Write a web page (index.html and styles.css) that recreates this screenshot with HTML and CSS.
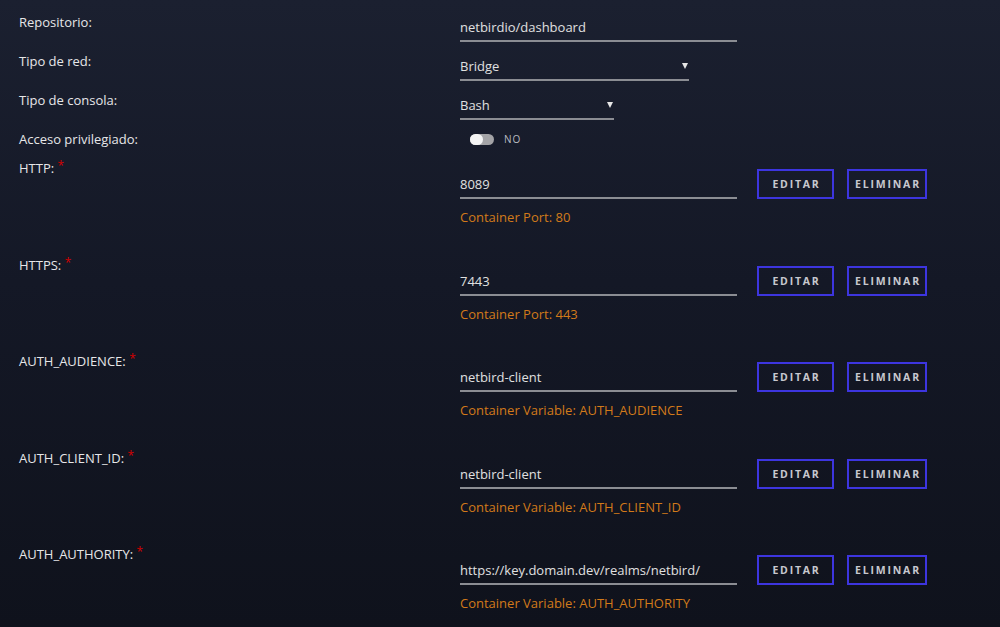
FILE: index.html
```html
<!DOCTYPE html>
<html>
<head>
<meta charset="utf-8">
<title>Docker - netbird dashboard</title>
<link rel="stylesheet" href="styles.css">
</head>
<body>
<div class="form">
	<div class="row">
		<div class="label">Repositorio:</div>
		<div class="field"><div class="input w-repo">netbirdio/dashboard</div></div>
	</div>
	<div class="row">
		<div class="label">Tipo de red:</div>
		<div class="field"><div class="input select w-net">Bridge<span class="arrow"></span></div></div>
	</div>
	<div class="row">
		<div class="label">Tipo de consola:</div>
		<div class="field"><div class="input select w-shell">Bash<span class="arrow"></span></div></div>
	</div>
	<div class="row row-switch">
		<div class="label">Acceso privilegiado:</div>
		<div class="field"><span class="switch"><span class="knob"></span></span><span class="switch-text">NO</span></div>
	</div>

	<div class="row port">
		<div class="label">HTTP: <span class="req">*</span></div>
		<div class="field">
			<div class="line"><div class="input w-repo">8089</div><button class="btn">EDITAR</button><button class="btn">ELIMINAR</button></div>
			<div class="help">Container Port: 80</div>
		</div>
	</div>
	<div class="row port">
		<div class="label">HTTPS: <span class="req">*</span></div>
		<div class="field">
			<div class="line"><div class="input w-repo">7443</div><button class="btn">EDITAR</button><button class="btn">ELIMINAR</button></div>
			<div class="help">Container Port: 443</div>
		</div>
	</div>
	<div class="row port">
		<div class="label">AUTH_AUDIENCE: <span class="req">*</span></div>
		<div class="field">
			<div class="line"><div class="input w-repo">netbird-client</div><button class="btn">EDITAR</button><button class="btn">ELIMINAR</button></div>
			<div class="help">Container Variable: AUTH_AUDIENCE</div>
		</div>
	</div>
	<div class="row port">
		<div class="label">AUTH_CLIENT_ID: <span class="req">*</span></div>
		<div class="field">
			<div class="line"><div class="input w-repo">netbird-client</div><button class="btn">EDITAR</button><button class="btn">ELIMINAR</button></div>
			<div class="help">Container Variable: AUTH_CLIENT_ID</div>
		</div>
	</div>
	<div class="row port">
		<div class="label">AUTH_AUTHORITY: <span class="req">*</span></div>
		<div class="field">
			<div class="line"><div class="input w-repo">https://key.domain.dev/realms/netbird/</div><button class="btn">EDITAR</button><button class="btn">ELIMINAR</button></div>
			<div class="help">Container Variable: AUTH_AUTHORITY</div>
		</div>
	</div>
</div>
</body>
</html>
```

FILE: styles.css
```css
html, body {margin:0; padding:0; height:100%;}
body {background:linear-gradient(180deg, #1b2030 0%, #141826 45%, #0f121c 100%); color:#e6e6e8; font-family:"Open Sans", "Noto Sans", sans-serif; font-size:13px; overflow:hidden;}

.form {padding:13px 0 0 19px;}
.row {display:flex; height:39px;}
.label {width:441px; flex:none; line-height:18px;}
.field {flex:1;}
.req {color:#d40000; position:relative; top:-3px; font-size:12px;}

.input {line-height:18px; padding:5px 0 4px 0; border-bottom:2px solid #8b8d93; color:#e0e0e0; position:relative;}
.w-repo {width:277px;}
.w-net {width:229px;}
.w-shell {width:154px;}
.select .arrow {position:absolute; right:0; top:11px; border-left:3px solid transparent; border-right:3px solid transparent; border-top:6px solid #e6e6e6; margin-right:1px;}

.row-switch {height:29px;}
.row-switch .field {display:flex; align-items:center; height:18px; padding-left:10px;}
.switch {width:24px; height:11px; border-radius:6px; background:#a3a3a6; position:relative; display:inline-block;}
.switch .knob {position:absolute; left:0; top:0; width:13px; height:11px; border-radius:6px; background:#f4f4f4;}
.switch-text {margin-left:10px; font-size:10px; letter-spacing:1px; color:#b9bbc0;}

.port {height:96.5px;}
.port .line {display:flex; align-items:flex-end; margin-top:10px;}
.port .line .input {margin-right:20px;}
.btn {background:transparent; border:2px solid #3d35df; color:#c7c8cf; font-family:"Open Sans", sans-serif; font-weight:bold; font-size:10.5px; letter-spacing:1.8px; height:30px; padding:0 0 0 2px; margin:0 13px 0 0; cursor:pointer;}
.btn:nth-of-type(1) {width:77px;}
.btn:nth-of-type(2) {width:80px;}
.help {color:#d27a1a; line-height:18px; margin-top:9px;}
```
